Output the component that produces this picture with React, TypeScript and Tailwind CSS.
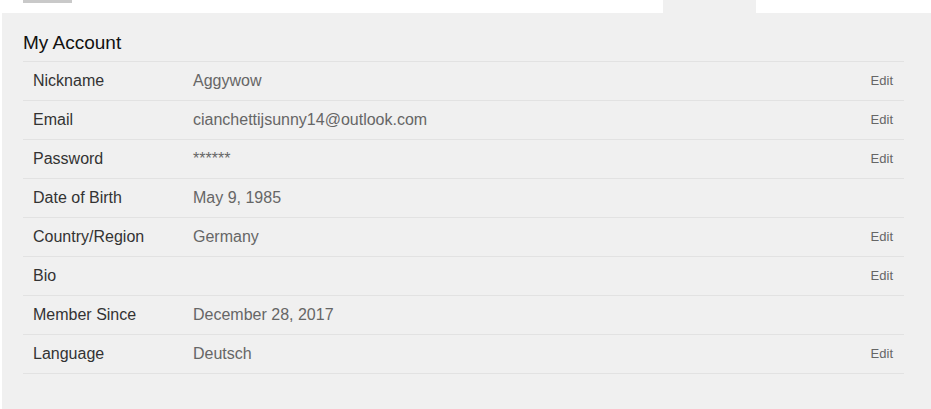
import React from 'react';

interface Row {
  label: string;
  value: string;
  editable: boolean;
}

const rows: Row[] = [
  { label: 'Nickname', value: 'Aggywow', editable: true },
  { label: 'Email', value: 'cianchettijsunny14@outlook.com', editable: true },
  { label: 'Password', value: '******', editable: true },
  { label: 'Date of Birth', value: 'May 9, 1985', editable: false },
  { label: 'Country/Region', value: 'Germany', editable: true },
  { label: 'Bio', value: '', editable: true },
  { label: 'Member Since', value: 'December 28, 2017', editable: false },
  { label: 'Language', value: 'Deutsch', editable: true },
];

export default function App() {
  return (
    <div className="w-full h-[409px] bg-white pl-[2px] font-['Liberation_Sans',Arial,sans-serif]">
      <div className="h-full bg-[#f0f0f0] flex flex-col">
        {/* Top strip (bottoms of the cards above) */}
        <div className="flex h-[13px] shrink-0">
          <div className="w-[661px] bg-white">
            <div className="ml-[21px] w-[49px] h-[3px] bg-[#c9c9c9]" />
          </div>
          <div className="w-[93px]" />
          <div className="flex-1 bg-white" />
        </div>

        {/* My Account */}
        <section className="pl-[21px] pr-[27px]">
          <h2 className="mt-[18px] h-[30px] text-[19px] leading-[24px] text-[#111]">My Account</h2>
          <div className="border-b border-[#e2e2e2]">
            {rows.map((row) => (
              <div
                key={row.label}
                className="flex items-center h-[39px] border-t border-[#e2e2e2] pl-[10px] pr-[11px]"
              >
                <div className="w-[160px] text-[16px] text-[#333]">{row.label}</div>
                <div className="flex-1 text-[16px] text-[#666]">{row.value}</div>
                {row.editable && <div className="text-[13px] text-[#666]">Edit</div>}
              </div>
            ))}
          </div>
        </section>
      </div>
    </div>
  );
}
